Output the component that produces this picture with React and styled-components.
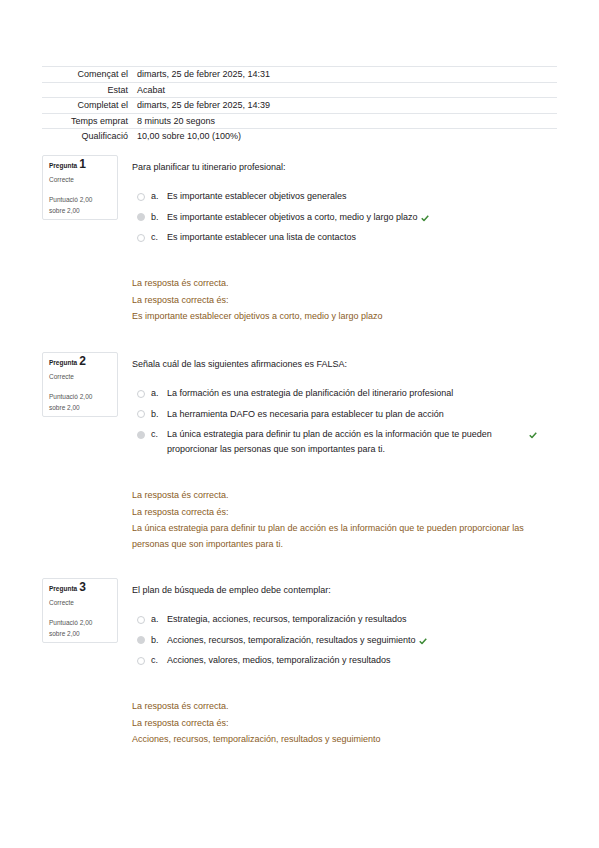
import React from "react";
import styled, { createGlobalStyle } from "styled-components";

const Global = createGlobalStyle`
  html, body { margin: 0; padding: 0; background: #fff; }
  body {
    font-family: "Liberation Sans", Arial, sans-serif;
    color: #1d2125;
    -webkit-font-smoothing: antialiased;
  }
`;

const Page = styled.div`
  width: 599px;
  box-sizing: border-box;
  padding: 66px 42px 40px 42px;
`;

const Summary = styled.table`
  width: 100%;
  border-collapse: collapse;
  font-size: 9px;
  margin-bottom: 11.5px;
`;

const SRow = styled.tr`
  border-top: 1px solid #e3e6ea;
`;

const SLabel = styled.th`
  width: 86px;
  text-align: right;
  font-weight: normal;
  padding: 0;
  height: 14.5px;
  line-height: 14.5px;
  white-space: nowrap;
`;

const SValue = styled.td`
  padding: 0 0 0 9px;
  height: 14.5px;
  line-height: 14.5px;
`;

const Block = styled.div`
  display: flex;
  align-items: flex-start;
  gap: 14px;
  margin-bottom: ${(p) => p.$mb}px;
`;

const InfoBox = styled.div`
  width: 76px;
  box-sizing: border-box;
  border: 1px solid #e0e3e7;
  border-radius: 2px;
  padding: 1px 6px 3px 6px;
  font-size: 6.5px;
  color: #555;
  flex-shrink: 0;
`;

const QTitle = styled.div`
  font-weight: bold;
  color: #1d2125;
  line-height: 14px;
  font-size: 6.5px;
  margin-bottom: 1px;
`;

const QNum = styled.span`
  font-size: 12px;
  font-weight: bold;
  margin-left: 2px;
`;

const State = styled.div`
  line-height: 11px;
  margin-bottom: 9px;
`;

const Grade = styled.div`
  line-height: 11px;
`;

const Content = styled.div`
  flex: 1;
  padding-top: 5px;
  font-size: 9px;
`;

const QText = styled.div`
  line-height: 14px;
  margin-bottom: 12px;
`;

const Answers = styled.div`
  display: flex;
  flex-direction: column;
`;

const Option = styled.div`
  display: flex;
  align-items: flex-start;
  padding: 3px 0 2.5px 5px;
  width: 400px;
`;

const Radio = styled.span`
  width: 6px;
  height: 6px;
  border-radius: 50%;
  border: 1px solid ${(p) => (p.$checked ? "#d2d4d7" : "#cdd0d4")};
  background: ${(p) => (p.$checked ? "#d2d4d7" : "#fff")};
  margin-top: 3.5px;
  margin-right: 6px;
  flex-shrink: 0;
  box-sizing: content-box;
`;

const Letter = styled.span`
  width: 16px;
  line-height: 15px;
  flex-shrink: 0;
`;

const OptText = styled.span`
  flex: ${(p) => (p.$wrap ? 1 : "0 1 auto")};
  line-height: 15px;
`;

const Check = styled.svg`
  width: 8px;
  height: 8px;
  margin-left: 3px;
  margin-top: 4px;
  flex-shrink: 0;
`;

const Feedback = styled.div`
  margin-top: 28px;
  color: #8a5c1e;
  font-size: 9px;
`;

const FbLine = styled.div`
  line-height: 15px;
  margin-bottom: 1.5px;
`;

const RightAnswer = styled.div`
  line-height: 16px;
`;

const CheckIcon = () => (
  <Check viewBox="0 0 16 16">
    <path
      d="M1.5 8.5 L6 13 L14.5 3.5"
      fill="none"
      stroke="#3d8a36"
      strokeWidth="3"
      strokeLinejoin="round"
    />
  </Check>
);

const summary = [
  ["Començat el", "dimarts, 25 de febrer 2025, 14:31"],
  ["Estat", "Acabat"],
  ["Completat el", "dimarts, 25 de febrer 2025, 14:39"],
  ["Temps emprat", "8 minuts 20 segons"],
  ["Qualificació", "10,00 sobre 10,00 (100%)"],
];

const questions = [
  {
    n: 1,
    text: "Para planificar tu itinerario profesional:",
    options: [
      "Es importante establecer objetivos generales",
      "Es importante establecer objetivos a corto, medio y largo plazo",
      "Es importante establecer una lista de contactos",
    ],
    correct: 1,
    answer: "Es importante establecer objetivos a corto, medio y largo plazo",
    mb: 28,
  },
  {
    n: 2,
    text: "Señala cuál de las siguientes afirmaciones es FALSA:",
    options: [
      "La formación es una estrategia de planificación del itinerario profesional",
      "La herramienta DAFO es necesaria para establecer tu plan de acción",
      "La única estrategia para definir tu plan de acción es la información que te pueden proporcionar las personas que son importantes para ti.",
    ],
    correct: 2,
    wrap: true,
    answer:
      "La única estrategia para definir tu plan de acción es la información que te pueden proporcionar las personas que son importantes para ti.",
    mb: 26,
  },
  {
    n: 3,
    text: "El plan de búsqueda de empleo debe contemplar:",
    options: [
      "Estrategia, acciones, recursos, temporalización y resultados",
      "Acciones, recursos, temporalización, resultados y seguimiento",
      "Acciones, valores, medios, temporalización y resultados",
    ],
    correct: 1,
    answer: "Acciones, recursos, temporalización, resultados y seguimiento",
    mb: 0,
  },
];

const letters = ["a.", "b.", "c."];

export default function App() {
  return (
    <>
      <Global />
      <Page>
        <Summary>
          <tbody>
            {summary.map(([l, v]) => (
              <SRow key={l}>
                <SLabel>{l}</SLabel>
                <SValue>{v}</SValue>
              </SRow>
            ))}
          </tbody>
        </Summary>
        {questions.map((q) => (
          <Block key={q.n} $mb={q.mb}>
            <InfoBox>
              <QTitle>
                Pregunta<QNum>{q.n}</QNum>
              </QTitle>
              <State>Correcte</State>
              <Grade>
                Puntuació 2,00
                <br />
                sobre 2,00
              </Grade>
            </InfoBox>
            <Content>
              <QText>{q.text}</QText>
              <Answers>
                {q.options.map((o, i) => {
                  const sel = i === q.correct;
                  const wrap = sel && q.wrap;
                  return (
                    <Option key={i}>
                      <Radio $checked={sel} />
                      <Letter>{letters[i]}</Letter>
                      <OptText $wrap={wrap}>{o}</OptText>
                      {sel && <CheckIcon />}
                    </Option>
                  );
                })}
              </Answers>
              <Feedback>
                <FbLine>La resposta és correcta.</FbLine>
                <RightAnswer>
                  La resposta correcta és:
                  <br />
                  {q.answer}
                </RightAnswer>
              </Feedback>
            </Content>
          </Block>
        ))}
      </Page>
    </>
  );
}
